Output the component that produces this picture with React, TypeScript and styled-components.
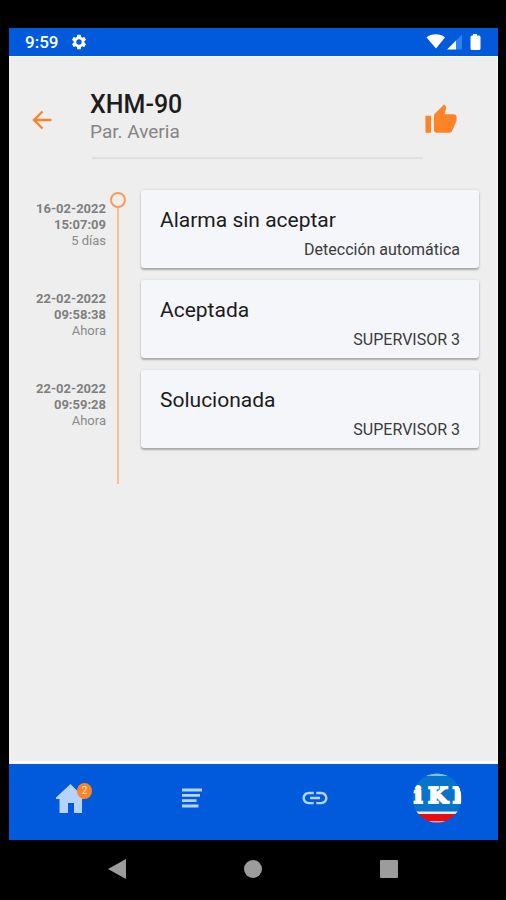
import React from "react";
import styled, { createGlobalStyle } from "styled-components";

const colors = {
  blue: "#0159dc",
  orange: "#fd8426",
  line: "#fdbe92",
  surface: "#eeeeee",
  card: "#f4f6fa",
  icon: "#b5d3fb",
  system: "#9c9c9c",
};

const GlobalStyle = createGlobalStyle`
  * { box-sizing: border-box; }
  body { margin: 0; background: #000; font-family: Roboto, "Liberation Sans", sans-serif; }
  h1, h2, p, ol { margin: 0; padding: 0; }
  ol { list-style: none; }
`;

const Device = styled.div`
  display: flex;
  flex-direction: column;
  min-height: 100vh;
  padding: 28px 8px 0 9px;
  background: #000;
`;

const StatusBar = styled.div`
  display: flex;
  align-items: center;
  justify-content: space-between;
  height: 28px;
  padding: 0 16px;
  background: ${colors.blue};
  color: #fff;
`;

const StatusGroup = styled.div`
  display: flex;
  align-items: center;
  gap: 12px;
`;

const Clock = styled.time`
  font-size: 17px;
  font-weight: 500;
  line-height: 30px;
`;

const Screen = styled.main`
  flex: 1;
  background: ${colors.surface};
  border-top: 1px solid #fafafa;
  border-right: 1px solid #fafafa;
  border-bottom: 3px solid #fdfdfd;
`;

const Header = styled.header`
  display: grid;
  grid-template-columns: 81px 1fr 73px;
  align-items: center;
  padding-top: 25px;
`;

const IconButton = styled.button<{ $color: string }>`
  display: flex;
  align-items: center;
  justify-content: center;
  padding: 0;
  border: 0;
  background: none;
  color: ${(p) => p.$color};
  cursor: pointer;
`;

const BackButton = styled(IconButton)`
  justify-self: start;
  margin-left: 20px;
`;

const LikeButton = styled(IconButton)`
  justify-self: start;
`;

const Heading = styled.div`
  padding: 8px 0 13px;
`;

const Title = styled.h1`
  font-size: 25px;
  font-weight: 500;
  line-height: 30px;
  color: #1d1d1d;
`;

const Subtitle = styled.p`
  font-size: 19px;
  line-height: 24px;
  color: #858585;
`;

const Divider = styled.hr`
  height: 2px;
  margin: 0 74px 0 83px;
  border: 0;
  background: #e0e0e0;
`;

const Timeline = styled.section`
  display: grid;
  grid-template-columns: 101px 16px 1fr;
  padding: 31px 18px 0 0;
`;

const Rail = styled.div`
  grid-column: 2;
  grid-row: 1;
  display: flex;
  flex-direction: column;
  align-items: center;
  padding-top: 2px;
`;

const RailDot = styled.span`
  width: 16px;
  height: 16px;
  border: 2px solid #fc9a58;
  border-radius: 50%;
`;

const RailLine = styled.span`
  flex: 1;
  width: 2px;
  background: ${colors.line};
`;

const Events = styled.ol`
  grid-column: 1 / -1;
  grid-row: 1;
  display: grid;
  gap: 12px;
  padding-bottom: 36px;
`;

const EventRow = styled.li`
  display: grid;
  grid-template-columns: 97px 1fr;
  column-gap: 35px;
`;

const Stamp = styled.div`
  padding-top: 11px;
  font-size: 13px;
  line-height: 16px;
  text-align: right;
  color: #8a8a8a;
`;

const StampDate = styled.time`
  display: block;
  font-weight: 700;
  color: #7f7f7f;
`;

const Card = styled.article`
  display: flex;
  flex-direction: column;
  min-height: 78px;
  padding: 16px 19px 8px;
  border-radius: 3px;
  background: ${colors.card};
  box-shadow: 0 2px 2px rgba(0, 0, 0, 0.28), 0 0 3px rgba(0, 0, 0, 0.1);
`;

const CardTitle = styled.h2`
  font-size: 21px;
  font-weight: 400;
  line-height: 28px;
  color: #1c1c1c;
`;

const CardSource = styled.p`
  margin-top: auto;
  font-size: 16px;
  line-height: 20px;
  text-align: right;
  color: #3b3b3b;
`;

const TabBar = styled.nav`
  display: grid;
  grid-template-columns: repeat(4, 1fr);
  height: 76px;
  padding-bottom: 8px;
  background: ${colors.blue};
`;

const TabIcon = styled.span`
  position: relative;
  display: flex;
`;

const Badge = styled.span`
  position: absolute;
  top: 0;
  right: -8px;
  width: 15px;
  height: 16px;
  border-radius: 50%;
  background: ${colors.orange};
  color: #ffe3cb;
  font: 10px/16px Roboto, sans-serif;
  text-align: center;
`;

const SystemBar = styled.nav`
  display: grid;
  grid-template-columns: repeat(3, 1fr);
  height: 60px;
  padding: 0 41px 2px 40px;
`;

const events = [
  { date: "16-02-2022", time: "15:07:09", ago: "5 días", title: "Alarma sin aceptar", source: "Detección automática" },
  { date: "22-02-2022", time: "09:58:38", ago: "Ahora", title: "Aceptada", source: "SUPERVISOR 3" },
  { date: "22-02-2022", time: "09:59:28", ago: "Ahora", title: "Solucionada", source: "SUPERVISOR 3" },
];

const GearIcon = () => (
  <svg width="18" height="18" viewBox="0 0 24 24" fill="currentColor" aria-hidden="true">
    <path d="M19.14 12.94c.04-.3.06-.61.06-.94 0-.32-.02-.64-.07-.94l2.03-1.58a.49.49 0 0 0 .12-.61l-1.92-3.32a.49.49 0 0 0-.59-.22l-2.39.96c-.5-.38-1.03-.7-1.62-.94l-.36-2.54a.48.48 0 0 0-.48-.41h-3.84a.47.47 0 0 0-.47.41l-.36 2.54c-.59.24-1.13.57-1.62.94l-2.39-.96a.48.48 0 0 0-.59.22L2.74 8.87a.47.47 0 0 0 .12.61l2.03 1.58c-.05.3-.09.63-.09.94s.02.64.07.94l-2.03 1.58a.49.49 0 0 0-.12.61l1.92 3.32c.12.22.37.29.59.22l2.39-.96c.5.38 1.03.7 1.62.94l.36 2.54c.05.24.24.41.48.41h3.84c.24 0 .44-.17.47-.41l.36-2.54c.59-.24 1.13-.56 1.62-.94l2.39.96c.22.08.47 0 .59-.22l1.92-3.32a.47.47 0 0 0-.12-.61zM12 15.6A3.6 3.6 0 1 1 12 8.4a3.6 3.6 0 0 1 0 7.2z" />
  </svg>
);

const SignalIcons = () => (
  <svg width="56" height="18" viewBox="0 0 56 18" aria-hidden="true">
    <path d="M0.500 4.500C5 .3 14.500 .3 19 4.500L10 15.500z" fill="#fff" />
    <path d="M21 16.500L30 7.500v9z" fill="#fff" />
    <path d="M30 7.500L36 1.500v15h-6z" fill="#2b84ee" />
    <path d="M47 1h4v1.500h2q1.500 0 1.500 1.500v11.500q0 1.500-1.500 1.500h-7q-1.500 0-1.500-1.500V4q0-1.500 1.500-1.500h1z" fill="#fff" />
  </svg>
);

const BackIcon = () => (
  <svg width="26" height="26" viewBox="0 0 26 26" fill="none" stroke="currentColor" strokeWidth="2.400" aria-hidden="true">
    <path d="M22.500 13H5M13.500 4.500L5 13l8.500 8.500" />
  </svg>
);

const ThumbIcon = () => (
  <svg width="34" height="34" viewBox="0 0 24 24" fill="currentColor" aria-hidden="true">
    <path d="M1 21h4V9H1v12zm22-11c0-1.100-.9-2-2-2h-6.310l.95-4.570.03-.32c0-.41-.17-.79-.44-1.060L14.170 1 7.590 7.590C7.220 7.950 7 8.450 7 9v10c0 1.100.9 2 2 2h9c.83 0 1.540-.5 1.840-1.220l3.020-7.050c.09-.23.14-.47.14-.73v-2z" />
  </svg>
);

const HomeIcon = () => (
  <svg width="28" height="30" viewBox="0 0 28 30" fill="currentColor" aria-hidden="true">
    <path d="M14.500 1L28 14.500V16h-2v14h-8V20h-6v10H3.500V16H0v-1.500z" />
  </svg>
);

const ListIcon = () => (
  <svg width="20" height="20" viewBox="0 0 20 20" stroke="currentColor" strokeWidth="2.800" aria-hidden="true">
    <path d="M0 2h20M0 7.300h18M0 12.700h14.500M0 18h16.500" />
  </svg>
);

const LinkIcon = () => (
  <svg width="30" height="30" viewBox="0 0 24 24" fill="currentColor" aria-hidden="true">
    <path d="M3.900 12c0-1.710 1.390-3.100 3.100-3.100h4V7H7c-2.760 0-5 2.240-5 5s2.240 5 5 5h4v-1.900H7c-1.710 0-3.100-1.390-3.100-3.100zM8 13h8v-2H8v2zm9-6h-4v1.900h4c1.710 0 3.100 1.390 3.100 3.100s-1.390 3.100-3.100 3.100h-4V17h4c2.760 0 5-2.240 5-5s-2.240-5-5-5z" />
  </svg>
);

const Logo = () => (
  <svg width="50" height="50" viewBox="0 0 50 50" aria-hidden="true">
    <defs>
      <clipPath id="logo-circle">
        <circle cx="25" cy="25" r="24.500" />
      </clipPath>
    </defs>
    <g clipPath="url(#logo-circle)">
      <rect width="50" height="50" fill="#0873cb" />
      <rect width="50" height="3" fill="#82bdf0" />
      <rect y="38.500" width="50" height="2.500" fill="#e3eefb" />
      <rect y="41" width="50" height="9" fill="#ed0910" />
      <rect y="48" width="50" height="2" fill="#d8a4c0" />
      <g fill="#fff" stroke="#fff" strokeWidth="2" fontFamily="'DejaVu Serif', serif" fontWeight="700" fontSize="23" textAnchor="middle">
        <text x="6" y="30">i</text>
        <text x="26" y="30">K</text>
        <text x="46" y="30">I</text>
      </g>
    </g>
  </svg>
);

export default function App() {
  return (
    <>
      <GlobalStyle />
      <Device>
        <StatusBar>
          <StatusGroup>
            <Clock>9:59</Clock>
            <GearIcon />
          </StatusGroup>
          <StatusGroup>
            <SignalIcons />
          </StatusGroup>
        </StatusBar>
        <Screen>
          <Header>
            <BackButton $color={colors.orange} aria-label="Volver">
              <BackIcon />
            </BackButton>
            <Heading>
              <Title>XHM-90</Title>
              <Subtitle>Par. Averia</Subtitle>
            </Heading>
            <LikeButton $color={colors.orange} aria-label="Aceptar">
              <ThumbIcon />
            </LikeButton>
          </Header>
          <Divider />
          <Timeline>
            <Events>
              {events.map((e) => (
                <EventRow key={e.time}>
                  <Stamp>
                    <StampDate>
                      {e.date}
                      <br />
                      {e.time}
                    </StampDate>
                    {e.ago}
                  </Stamp>
                  <Card>
                    <CardTitle>{e.title}</CardTitle>
                    <CardSource>{e.source}</CardSource>
                  </Card>
                </EventRow>
              ))}
            </Events>
            <Rail>
              <RailDot />
              <RailLine />
            </Rail>
          </Timeline>
        </Screen>
        <TabBar>
          <IconButton $color={colors.icon} aria-label="Inicio">
            <TabIcon>
              <HomeIcon />
              <Badge>2</Badge>
            </TabIcon>
          </IconButton>
          <IconButton $color={colors.icon} aria-label="Lista">
            <ListIcon />
          </IconButton>
          <IconButton $color={colors.icon} aria-label="Enlaces">
            <LinkIcon />
          </IconButton>
          <IconButton $color={colors.icon} aria-label="Perfil">
            <Logo />
          </IconButton>
        </TabBar>
        <SystemBar>
          <IconButton $color={colors.system} aria-label="Atrás">
            <svg width="18" height="20" viewBox="0 0 18 20" fill="currentColor" aria-hidden="true">
              <path d="M0 10L18 0v20z" />
            </svg>
          </IconButton>
          <IconButton $color={colors.system} aria-label="Pantalla principal">
            <svg width="18" height="18" viewBox="0 0 18 18" fill="currentColor" aria-hidden="true">
              <circle cx="9" cy="9" r="9" />
            </svg>
          </IconButton>
          <IconButton $color={colors.system} aria-label="Recientes">
            <svg width="18" height="18" viewBox="0 0 18 18" fill="currentColor" aria-hidden="true">
              <rect width="18" height="18" rx="1" />
            </svg>
          </IconButton>
        </SystemBar>
      </Device>
    </>
  );
}
